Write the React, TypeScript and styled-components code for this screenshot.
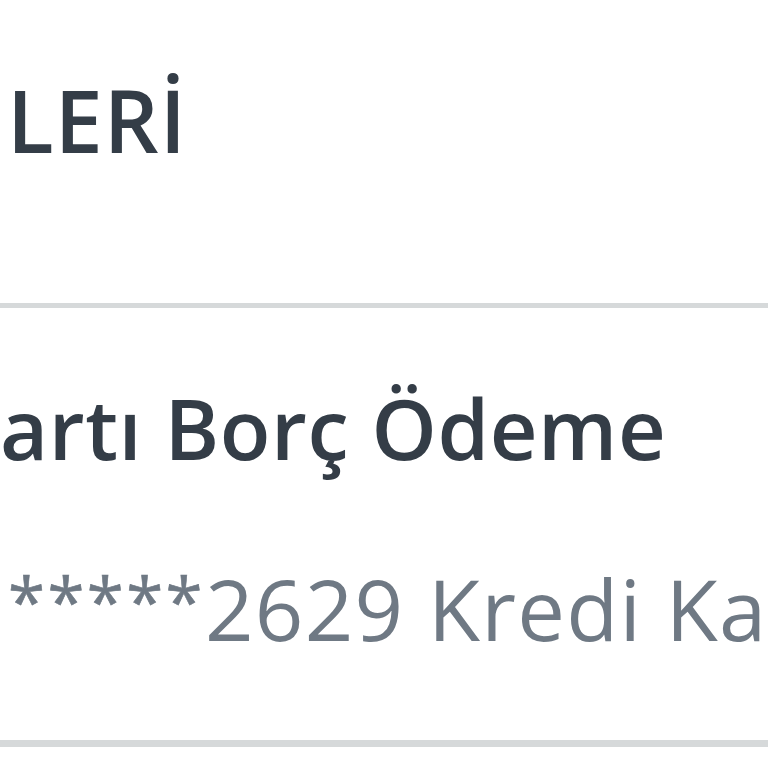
import styled, { createGlobalStyle } from "styled-components";

const GlobalStyle = createGlobalStyle`
  html, body {
    margin: 0;
    padding: 0;
    background: #ffffff;
    overflow: hidden;
  }
  body {
    font-family: "Open Sans", "Noto Sans", "Liberation Sans", sans-serif;
  }
`;

const Page = styled.div`
  display: flex;
  flex-direction: column;
  width: 768px;
  height: 768px;
  overflow: hidden;
  background: #ffffff;
`;

const Header = styled.div`
  padding: 68px 0 132px 7px;
  border-bottom: 5px solid #d6d9da;
`;

const HeaderTitle = styled.h1`
  position: relative;
  margin: 0;
  font-size: 86px;
  line-height: 1.2;
  font-weight: 600;
  letter-spacing: 1px;
  color: #343d47;
  white-space: nowrap;
`;

const Item = styled.div`
  display: flex;
  flex-direction: column;
  padding: 70px 0 81px 0;
  border-bottom: 7px solid #d6d9da;
`;

const ItemTitle = styled.div`
  position: relative;
  font-size: 83px;
  line-height: 1.2;
  font-weight: 600;
  letter-spacing: 0.6px;
  color: #343d47;
  white-space: nowrap;
`;

const ItemDetail = styled.div`
  position: relative;
  margin-top: 79px;
  padding-left: 8px;
  font-size: 85px;
  line-height: 1.2;
  font-weight: 400;
  letter-spacing: 1.3px;
  color: #6f7984;
  white-space: nowrap;
`;

// masked digits of the card number, drawn smaller and raised
const Mask = styled.span`
  font-size: 0.79em;
  letter-spacing: 2.4px;
  vertical-align: 14px;
  -webkit-text-stroke: 0.6px #6f7984;
`;

// the part of the text that lies left of the visible crop
const Cut = styled.span`
  position: absolute;
  right: 100%;
  top: 0;
  white-space: nowrap;
`;

export default function App() {
  return (
    <>
      <GlobalStyle />
      <Page>
        <Header>
          <HeaderTitle>
            <Cut>ÖDEME İŞLEM</Cut>LERİ
          </HeaderTitle>
        </Header>
        <Item>
          <ItemTitle>
            <Cut>Kredi K</Cut>artı Borç Ödeme
          </ItemTitle>
          <ItemDetail>
            <Cut>5528 79*</Cut>
            <Mask>*****</Mask>2629 Kredi Kartı
          </ItemDetail>
        </Item>
      </Page>
    </>
  );
}
